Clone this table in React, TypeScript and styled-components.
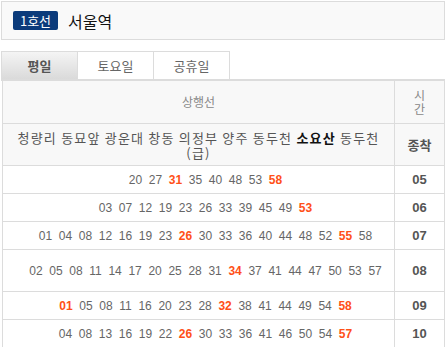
import styled, { createGlobalStyle } from "styled-components";

const GlobalStyle = createGlobalStyle`
  html, body {
    margin: 0;
    padding: 0;
    background: #fff;
  }
  body {
    font-family: "Noto Sans CJK KR", "Liberation Sans", sans-serif;
    font-size: 12px;
  }
`;

type Minute = { m: string; hot?: boolean };

const rows: { hour: string; tall?: boolean; mins: Minute[] }[] = [
  { hour: "05", mins: parse("20 27 *31 35 40 48 53 *58") },
  { hour: "06", mins: parse("03 07 12 19 23 26 33 39 45 49 *53") },
  { hour: "07", mins: parse("01 04 08 12 16 19 23 *26 30 33 36 40 44 48 52 *55 58") },
  { hour: "08", tall: true, mins: parse("02 05 08 11 14 17 20 25 28 31 *34 37 41 44 47 50 53 57") },
  { hour: "09", mins: parse("*01 05 08 11 16 20 23 28 *32 38 41 44 49 54 *58") },
  { hour: "10", mins: parse("04 08 13 16 19 22 *26 30 33 36 41 46 50 54 *57") },
];

function parse(s: string): Minute[] {
  return s.split(" ").map((t) => (t.startsWith("*") ? { m: t.slice(1), hot: true } : { m: t }));
}

export default function App() {
  return (
    <Page>
      <GlobalStyle />
      <StationBar>
        <LineBadge>1호선</LineBadge>
        <StationName>서울역</StationName>
      </StationBar>

      <Tabs>
        <Tab $active>평일</Tab>
        <Tab>토요일</Tab>
        <Tab>공휴일</Tab>
      </Tabs>

      <Timetable>
        <tbody>
          <tr>
            <HeadCell $h={42}>상행선</HeadCell>
            <HeadCell $h={42}>
              <Stack>시</Stack>
              <Stack>간</Stack>
            </HeadCell>
          </tr>
          <tr>
            <StationsCell $h={41}>
              <Stack>
                청량리 동묘앞 광운대 창동 의정부 양주 동두천 <b>소요산</b> 동두천
              </Stack>
              <Stack>(급)</Stack>
            </StationsCell>
            <HourCell $h={41} $head>
              종착
            </HourCell>
          </tr>
          {rows.map((r) => (
            <tr key={r.hour}>
              <MinutesCell $h={r.tall ? 41 : 27}>
                {r.mins.map((x, i) => (
                  <span key={i}>
                    {i > 0 ? " " : ""}
                    {x.hot ? <Hot>{x.m}</Hot> : x.m}
                  </span>
                ))}
              </MinutesCell>
              <HourCell $h={r.tall ? 41 : 27}>{r.hour}</HourCell>
            </tr>
          ))}
        </tbody>
      </Timetable>
    </Page>
  );
}

const Page = styled.div`
  width: 445px;
  padding: 1px 0 0 1px;
  box-sizing: border-box;
`;

const StationBar = styled.div`
  width: 444px;
  height: 39px;
  box-sizing: border-box;
  border: 1px solid #dcdcdc;
  background: #f9f9f9;
  display: flex;
  align-items: center;
  padding-left: 11px;
  gap: 10px;
`;

const LineBadge = styled.span`
  display: inline-flex;
  align-items: center;
  justify-content: center;
  width: 45px;
  height: 19px;
  border-radius: 2px;
  background: #0b3b7b;
  color: #fff;
  font-size: 13px;
  line-height: 19px;
`;

const StationName = styled.span`
  font-size: 16px;
  color: #111;
  line-height: 20px;
`;

const Tabs = styled.div`
  display: flex;
  margin-top: 11px;
  border-bottom: 2px solid #dcdcdc;
`;

const Tab = styled.div<{ $active?: boolean }>`
  width: 77px;
  height: 28px;
  box-sizing: border-box;
  border: 1px solid #dcdcdc;
  border-bottom: none;
  margin-right: -1px;
  display: flex;
  align-items: center;
  justify-content: center;
  font-size: 13px;
  color: ${({ $active }) => ($active ? "#555" : "#666")};
  font-weight: ${({ $active }) => ($active ? 700 : 400)};
  background: ${({ $active }) =>
    $active ? "linear-gradient(#f4f4f4, #dadada)" : "#fff"};
`;

const Timetable = styled.table`
  margin-left: 1px;
  width: 443px;
  border-collapse: collapse;
  table-layout: fixed;
  border-left: 1px solid #dcdcdc;
  border-right: 1px solid #dcdcdc;
  td {
    border-bottom: 1px solid #dcdcdc;
    padding: 0;
    text-align: center;
    vertical-align: middle;
  }
  td + td {
    border-left: 1px solid #dcdcdc;
    width: 49px;
  }
`;

const Stack = styled.div`
  height: 14px;
  line-height: 14px;
  overflow: visible;
  white-space: nowrap;
`;

const HeadCell = styled.td<{ $h: number }>`
  height: ${({ $h }) => $h}px;
  background: #f8f8f8;
  color: #888;
  font-size: 12px;
  line-height: 14px;
`;

const StationsCell = styled.td<{ $h: number }>`
  height: ${({ $h }) => $h}px;
  background: #f8f8f8;
  color: #555;
  font-size: 13px;
  letter-spacing: 1.2px;
  b {
    color: #111;
  }
  ${Stack} {
    height: 15px;
    line-height: 15px;
  }
`;

const MinutesCell = styled.td<{ $h: number }>`
  height: ${({ $h }) => $h}px;
  padding-left: 14px !important;
  font-family: "Liberation Sans", sans-serif;
  font-size: 12px;
  color: #666;
  word-spacing: 3.3px;
`;

const Hot = styled.b`
  color: #ff5018;
`;

const HourCell = styled.td<{ $h: number; $head?: boolean }>`
  height: ${({ $h }) => $h}px;
  font-family: ${({ $head }) =>
    $head ? `"Noto Sans CJK KR", sans-serif` : `"Liberation Sans", sans-serif`};
  font-weight: 700;
  font-size: 13px;
  color: #555;
  background: ${({ $head }) => ($head ? "#f8f8f8" : "#fff")};
`;
